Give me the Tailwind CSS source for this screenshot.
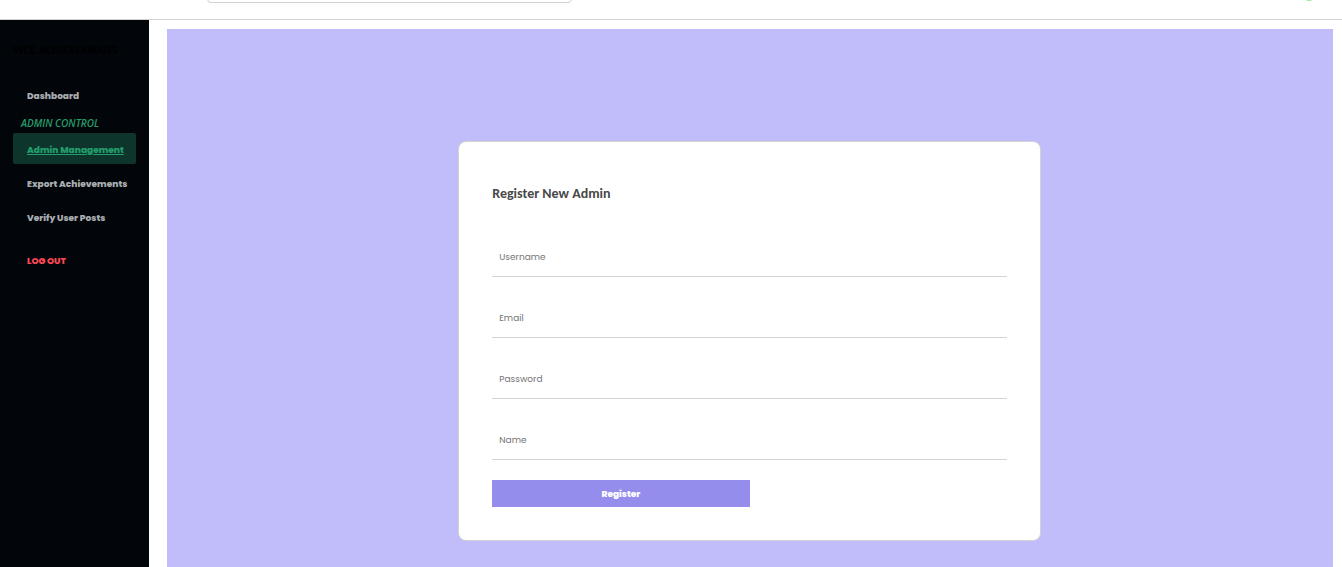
<!DOCTYPE html>
<html lang="en">
<head>
<meta charset="utf-8">
<meta name="viewport" content="width=device-width, initial-scale=1">
<title>Register New Admin</title>
<script src="https://cdn.jsdelivr.net/npm/@tailwindcss/browser@4"></script>
</head>
<body class="flex h-screen flex-col overflow-hidden bg-white font-['Poppins','Inter',sans-serif] text-[9px]">
  <!-- Top bar, scrolled so that only its lower edge shows -->
  <header class="flex h-5 shrink-0 flex-col justify-end overflow-hidden border-b border-[#d3d3d3]">
    <div class="mb-4 flex shrink-0 items-end justify-between pl-[207px] pr-[27px]">
      <input type="search" aria-label="Search" class="h-8 w-[365px] rounded border border-[#d0d0d0] outline-none">
      <span class="mb-0.5 size-3 rounded-full bg-[#90ee90]"></span>
    </div>
  </header>
  <div class="flex min-h-0 flex-1">
    <aside class="w-[149px] shrink-0 bg-[#020509] px-[13px] pt-5">
      <h1 class="h-10 whitespace-nowrap font-['Carlito','Noto_Sans',sans-serif] text-[12px] leading-5 font-bold text-black">WCE ACHIEVEMENTS</h1>
      <nav class="flex flex-col whitespace-nowrap font-extrabold text-[#a9adb0]">
        <a href="#" class="h-[31px] pl-3.5 leading-[33px]">Dashboard</a>
        <h2 class="h-[22px] pl-2 font-['Open_Sans',sans-serif] text-[10px] leading-6 font-semibold text-[#229e6b] italic">ADMIN CONTROL</h2>
        <a href="#" aria-current="page" class="h-[31px] rounded-xs bg-[#0e352c] pl-3.5 leading-[35px] text-[#229e6b] underline">Admin Management</a>
        <a href="#" class="mt-[3px] h-[31px] pl-3.5 leading-[35px]">Export Achievements</a>
        <a href="#" class="mt-[3px] h-[31px] pl-3.5 leading-[35px]">Verify User Posts</a>
        <a href="#" class="mt-3 h-[31px] pl-3.5 leading-[35px] text-[#ff4757]">LOG OUT</a>
      </nav>
    </aside>
    <main class="ml-[18px] mr-[9px] mt-[9px] flex flex-1 items-start justify-center bg-[#c1bdfa] pr-px pt-28">
      <form class="w-1/2 rounded-lg border border-[#d3d3d3] bg-white p-[33px]">
        <h2 class="mb-6 font-['Carlito','Open_Sans',sans-serif] text-[14px] leading-[38px] font-bold text-[#484848]">Register New Admin</h2>
        <div class="flex flex-col gap-[21px]">
          <input type="text" aria-label="Username" placeholder="Username" class="h-10 w-full border-b border-[#d3d3d3] px-[7px] pt-0.5 outline-none placeholder:text-[#757575]">
          <input type="email" aria-label="Email" placeholder="Email" class="h-10 w-full border-b border-[#d3d3d3] px-[7px] pt-0.5 outline-none placeholder:text-[#757575]">
          <input type="password" aria-label="Password" placeholder="Password" class="h-10 w-full border-b border-[#d3d3d3] px-[7px] pt-0.5 outline-none placeholder:text-[#757575]">
          <input type="text" aria-label="Name" placeholder="Name" class="h-10 w-full border-b border-[#d3d3d3] px-[7px] pt-0.5 outline-none placeholder:text-[#757575]">
        </div>
        <button type="submit" class="mt-5 block h-[27px] w-1/2 bg-[#958deb] pt-0.5 font-extrabold text-white">Register</button>
      </form>
    </main>
  </div>
</body>
</html>
